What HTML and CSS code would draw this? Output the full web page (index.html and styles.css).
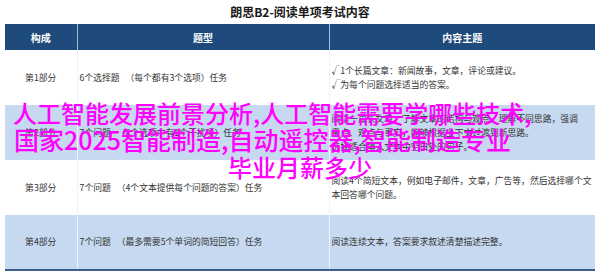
FILE: index.html
```html
<!DOCTYPE html>
<html lang="zh-CN">
<head>
<meta charset="utf-8">
<title>朗思B2-阅读单项考试内容</title>
<link rel="stylesheet" href="styles.css">
</head>
<body>
<div class="page">
  <h1 class="title">朗思B2-阅读单项考试内容</h1>
  <table class="exam">
    <colgroup>
      <col class="c1"><col class="c2"><col class="c3">
    </colgroup>
    <thead>
      <tr><th>构成</th><th>题型</th><th>内容主题</th></tr>
    </thead>
    <tbody>
      <tr class="white">
        <td class="part">第1部分</td>
        <td class="type">6个选择题&nbsp;&nbsp;&nbsp;（每个都有3个选项）任务</td>
        <td class="topic">√1个长篇文章：新闻故事，文章，评论或建议。<br>√为每个问题选择适当的答案。</td>
      </tr>
      <tr class="blue">
        <td class="part">第2部分</td>
        <td class="type">7个问题&nbsp;&nbsp;&nbsp;（8个选项中有1个干扰项）任务</td>
        <td class="topic">阅读一篇长文章，了解文章的结构与观点，理解不同思路，强调<br>重点、观点与事实，能够根据上下文过渡到新思路。<br>选择适合填入文本中空白处的句子。</td>
      </tr>
      <tr class="white">
        <td class="part">第3部分</td>
        <td class="type">7个问题&nbsp;&nbsp;&nbsp;（4个文本提供每个问题的答案）任务</td>
        <td class="topic">阅读4个简短文本，例如电子邮件，文章，广告等，然后选择哪个文<br>本回答哪个问题。</td>
      </tr>
      <tr class="blue last">
        <td class="part">第4部分</td>
        <td class="type">7个问题&nbsp;&nbsp;&nbsp;（最多需要5个单词的简短回答）任务</td>
        <td class="topic">阅读连续文本，答案要求叙述清楚描述完整。</td>
      </tr>
    </tbody>
  </table>
  <div class="overlay">
    <div class="ov-line">人工智能发展前景分析,人工智能需要学哪些技术,</div>
    <div class="ov-line ov-wide">国家2025智能制造,自动遥控器,智能制造专业</div>
    <div class="ov-line ov-center">毕业月薪多少</div>
  </div>
</div>
</body>
</html>
```

FILE: styles.css
```css
html, body {
  margin: 0;
  padding: 0;
  background: #ffffff;
}
.page {
  position: relative;
  width: 600px;
  height: 277px;
  overflow: hidden;
  font-family: "Noto Sans CJK SC", "Noto Sans", sans-serif;
}
.title {
  margin: 0;
  height: 24px;
  line-height: 23px;
  font-size: 12px;
  font-weight: 700;
  color: #1a1a1a;
  text-align: center;
}
.exam {
  margin-left: 5px;
  width: 590px;
  border-collapse: collapse;
  table-layout: fixed;
  font-size: 8.8px;
  color: #333333;
}
.c1 { width: 72px; }
.c2 { width: 252px; }
.c3 { width: 266px; }
.exam th {
  height: 26px;
  padding: 0;
  background: #1f4a7c;
  color: #ffffff;
  font-size: 10px;
  font-weight: 700;
  text-align: center;
  border-left: 1px solid #a9bcd6;
}
.exam th:first-child { border-left: none; }
.exam td {
  height: 55px;
  padding: 0 2px;
  vertical-align: middle;
  line-height: 14px;
  border-left: 1px solid #eef3fa;
}
.exam td:first-child { border-left: none; }
.exam tr.blue td { background: #c6d9f0; }
.exam tr.last td {
  height: 54px;
  border-bottom: 2px solid #3a5f8f;
}
.part { text-align: center; }
.type { text-align: left; white-space: nowrap; }
.exam td.topic {
  text-align: left;
  white-space: nowrap;
  padding: 0 0 0 2px;
}
.overlay {
  position: absolute;
  left: 0;
  top: 99px;
  width: 600px;
  color: #ff00ff;
  font-size: 24px;
  line-height: 27px;
  font-weight: 500;
  font-family: "Noto Sans CJK SC", sans-serif;
}
.ov-line {
  padding-left: 13px;
  white-space: nowrap;
}
.ov-line.ov-wide {
  font-size: 25px;
  padding-left: 14px;
}
.ov-line.ov-center {
  padding-left: 0;
  text-align: center;
}
```
